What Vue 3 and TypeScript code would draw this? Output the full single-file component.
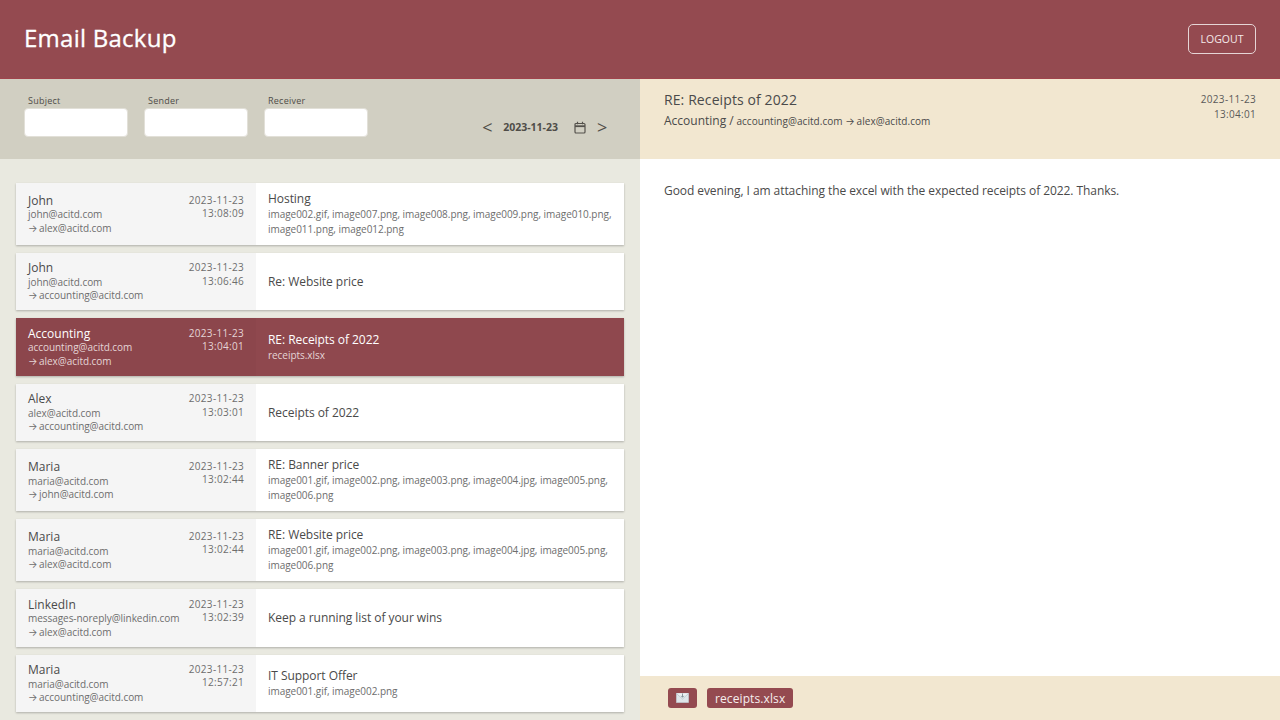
<script setup lang="ts">
interface Mail { name: string; from: string; to: string; date: string; time: string; subject: string; files?: string; active?: boolean }
const mails: Mail[] = [
  { name: 'John', from: 'john@acitd.com', to: 'alex@acitd.com', date: '2023-11-23', time: '13:08:09', subject: 'Hosting', files: 'image002.gif, image007.png, image008.png, image009.png, image010.png, image011.png, image012.png' },
  { name: 'John', from: 'john@acitd.com', to: 'accounting@acitd.com', date: '2023-11-23', time: '13:06:46', subject: 'Re: Website price' },
  { name: 'Accounting', from: 'accounting@acitd.com', to: 'alex@acitd.com', date: '2023-11-23', time: '13:04:01', subject: 'RE: Receipts of 2022', files: 'receipts.xlsx', active: true },
  { name: 'Alex', from: 'alex@acitd.com', to: 'accounting@acitd.com', date: '2023-11-23', time: '13:03:01', subject: 'Receipts of 2022' },
  { name: 'Maria', from: 'maria@acitd.com', to: 'john@acitd.com', date: '2023-11-23', time: '13:02:44', subject: 'RE: Banner price', files: 'image001.gif, image002.png, image003.png, image004.jpg, image005.png, image006.png' },
  { name: 'Maria', from: 'maria@acitd.com', to: 'alex@acitd.com', date: '2023-11-23', time: '13:02:44', subject: 'RE: Website price', files: 'image001.gif, image002.png, image003.png, image004.jpg, image005.png, image006.png' },
  { name: 'LinkedIn', from: 'messages-noreply@linkedin.com', to: 'alex@acitd.com', date: '2023-11-23', time: '13:02:39', subject: 'Keep a running list of your wins' },
  { name: 'Maria', from: 'maria@acitd.com', to: 'accounting@acitd.com', date: '2023-11-23', time: '12:57:21', subject: 'IT Support Offer', files: 'image001.gif, image002.png' },
]
const filters = ['Subject', 'Sender', 'Receiver']
</script>

<template>
  <div class="app">
    <header class="top">
      <h1>Email Backup</h1>
      <button class="logout">LOGOUT</button>
    </header>
    <main class="panes">
      <section class="left">
        <div class="filters">
          <label v-for="f in filters" :key="f" class="field">
            <span>{{ f }}</span>
            <input type="text" />
          </label>
          <div class="datenav">
            <span class="arrow">&lt;</span>
            <b>2023-11-23</b>
            <svg class="cal" width="12" height="13" viewBox="0 0 12 13" fill="none" stroke="#55524c" stroke-width="1.2">
              <rect x="1" y="2.5" width="10" height="9.5" rx="1" />
              <path d="M1 5.2h10" stroke-width="1.8" />
              <path d="M3.5 0.8v2.4M8.5 0.8v2.4" />
            </svg>
            <span class="arrow last">&gt;</span>
          </div>
        </div>
        <div class="list">
          <article v-for="(m, i) in mails" :key="i" class="card" :class="{ active: m.active }">
            <div class="meta">
              <div class="who">
                <div class="name">{{ m.name }}</div>
                <div class="addr">{{ m.from }}</div>
                <div class="addr"><span class="to">→</span> {{ m.to }}</div>
              </div>
              <div class="when">{{ m.date }}<br />{{ m.time }}</div>
            </div>
            <div class="body">
              <div class="subject">{{ m.subject }}</div>
              <div v-if="m.files" class="files">{{ m.files }}</div>
            </div>
          </article>
        </div>
      </section>
      <section class="right">
        <div class="dhead">
          <div>
            <div class="dsubject">RE: Receipts of 2022</div>
            <div class="dfrom"><span class="dname">Accounting /</span> accounting@acitd.com <span class="to">→</span> alex@acitd.com</div>
          </div>
          <div class="dwhen">2023-11-23<br />13:04:01</div>
        </div>
        <div class="dbody">Good evening, I am attaching the excel with the expected receipts of 2022. Thanks.</div>
        <div class="dfoot">
          <span class="chip icon">
            <svg width="13" height="10" viewBox="0 0 13 10">
              <rect x="0.3" y="0.3" width="12.4" height="9.4" fill="#dfe6ea" stroke="#b9c4cb" stroke-width="0.5" />
              <path d="M0.3 0.3L6.5 6l6.2-5.7" fill="#eef2f4" stroke="#aab6bd" stroke-width="0.6" />
              <path d="M6.5 0.5v3.6M5.2 2.8l1.3 1.5 1.3-1.5" fill="none" stroke="#7d8a92" stroke-width="0.9" />
            </svg>
          </span>
          <span class="chip">receipts.xlsx</span>
        </div>
      </section>
    </main>
  </div>
</template>

<style>
html, body { margin: 0; padding: 0; overflow: hidden; }
</style>

<style scoped>
.app { width: 1280px; height: 720px; display: flex; flex-direction: column; overflow: hidden; font-family: "Open Sans", "Noto Sans", sans-serif; color: #4a4a4a; }
.top { height: 79px; box-sizing: border-box; flex: none; background: #944a50; display: flex; align-items: center; justify-content: space-between; padding: 0 24px; border-bottom: 1px solid #a0444c; }
.top h1 { margin: 0 0 4px; font-size: 24px; font-weight: 400; color: #fff; letter-spacing: 0.25px; -webkit-text-stroke: 0.3px #fff; }
.logout { width: 68px; height: 30px; padding: 0; background: transparent; border: 1px solid #e6d5d6; border-radius: 5px; color: #f4e9ea; font: 400 10.5px "Open Sans", sans-serif; }
.panes { flex: 1; display: flex; min-height: 0; }
.left { width: 640px; flex: none; background: #e9e9e0; display: flex; flex-direction: column; }
.filters { height: 80px; flex: none; box-sizing: border-box; background: #d1cfc2; padding: 15px 33px 0 24px; display: flex; gap: 16px; }
.field { display: flex; flex-direction: column; width: 104px; }
.field span { font-size: 9px; line-height: 14px; margin-left: 4px; color: #4f4d48; letter-spacing: 0.25px; }
.field input { box-sizing: border-box; width: 104px; height: 29px; border: 1px solid #e2e0d8; border-radius: 4px; background: #fff; padding: 0; }
.datenav { margin-left: auto; display: flex; align-items: center; height: 24px; margin-top: 21px; color: #4f4d48; }
.datenav b { font-size: 10.5px; font-weight: 700; margin: 0 16px 0 11px; }
.arrow { font-size: 18px; width: 10px; text-align: center; }
.arrow.last { margin-left: 11px; }
.list { padding: 24px 16px 0; display: flex; flex-direction: column; gap: 8px; }
.card { display: flex; background: #fff; box-shadow: 0 1px 2px rgba(0, 0, 0, 0.25); }
.meta { width: 240px; flex: none; box-sizing: border-box; background: #f5f5f5; padding: 0 12px; display: flex; justify-content: space-between; align-items: center; }
.who { padding-top: 1px; }
.name { font-size: 12px; line-height: 14.45px; color: #4a4a4a; }
.addr { font-size: 10px; line-height: 13.5px; color: #6d6d6d; letter-spacing: -0.05px; }
.to { font-family: Inter, sans-serif; margin-right: -1px; }
.when { font-size: 10px; line-height: 13.5px; text-align: right; color: #6d6d6d; margin-top: -14px; letter-spacing: 0.3px; }
.body { flex: 1; padding: 8px 12px; min-height: 41.45px; display: flex; flex-direction: column; justify-content: center; }
.subject { font-size: 12px; line-height: 16px; color: #4a4a4a; letter-spacing: -0.05px; }
.files { font-size: 10px; line-height: 15px; color: #6d6d6d; letter-spacing: -0.04px; }
.card.active { background: #8f484e; }
.card.active .meta { background: #8c464c; }
.card.active .name, .card.active .subject { color: #fff; }
.card.active .addr, .card.active .when, .card.active .files { color: #e5d5d6; }
.right { flex: 1; display: flex; flex-direction: column; background: #fff; min-width: 0; }
.dhead { height: 80px; flex: none; box-sizing: border-box; background: #f2e7d0; padding: 12px 24px 0; display: flex; justify-content: space-between; }
.dsubject { font-size: 14px; line-height: 18px; color: #4a4a4a; letter-spacing: 0.1px; }
.dfrom { font-size: 10px; line-height: 16px; margin-top: 4px; color: #4a4a4a; letter-spacing: 0.05px; }
.dname { font-size: 12px; letter-spacing: 0; }
.dwhen { font-size: 10px; line-height: 15px; margin-top: 1px; text-align: right; color: #5a5a5a; letter-spacing: 0.3px; }
.dbody { flex: 1; padding: 24px; font-size: 12px; line-height: 16px; color: #4a4a4a; letter-spacing: -0.07px; }
.dfoot { height: 44px; flex: none; box-sizing: border-box; background: #f2e7d0; display: flex; align-items: center; padding: 0 28px; gap: 10px; }
.chip { height: 20px; display: inline-flex; align-items: center; justify-content: center; padding: 0 8px; background: #944a50; color: #f6eeee; font-size: 12px; border-radius: 3px; box-sizing: border-box; letter-spacing: 0.1px; }
.chip.icon { width: 29px; padding: 0; }
</style>
